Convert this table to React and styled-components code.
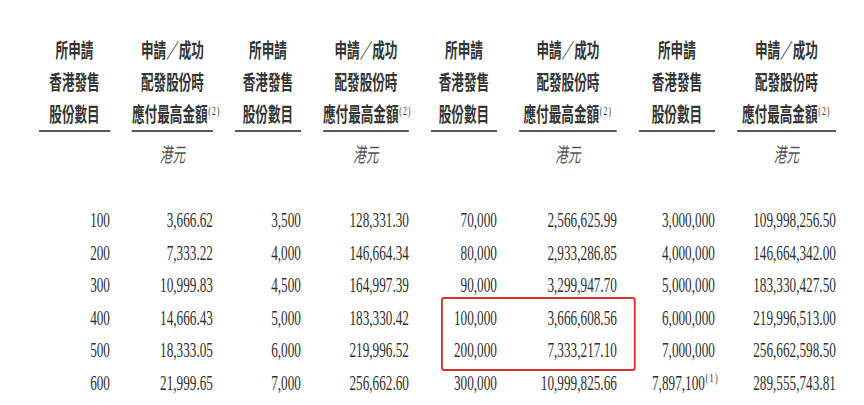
import React from "react";
import styled, { createGlobalStyle } from "styled-components";

// the source table is squeezed horizontally, so the grid is laid out wide and scaled
const K = 0.63;
const u = (v) => v / K;

const COLS = [71, 81, 66, 86, 66, 98, 76, 99];

const Global = createGlobalStyle`
  html, body {
    margin: 0;
    padding: 0;
    background: #fff;
    overflow: hidden;
  }
`;

const Page = styled.div`
  width: 864px;
  height: 405px;
  overflow: hidden;
`;

const Table = styled.div`
  display: grid;
  grid-template-columns: ${COLS.map((w) => `${u(w)}px`).join(" ")};
  grid-template-rows: auto auto repeat(6, 32.6px);
  column-gap: ${u(22)}px;
  padding: 34px 0 0 ${u(39)}px;
  width: max-content;
  transform: scaleX(${K});
  transform-origin: 0 0;
  color: #333;
`;

const HeaderCell = styled.div`
  grid-row: 1;
  grid-column: ${(p) => p.$col};
  font-family: "Noto Sans CJK TC", "Noto Sans CJK SC", sans-serif;
  font-weight: 700;
  font-size: 20px;
  line-height: 32px;
  text-align: center;
  white-space: nowrap;
  border-bottom: 2px solid #5a5a5a;
  color: #353535;
`;

const Note = styled.sup`
  font-family: "Liberation Serif", serif;
  font-weight: 400;
  font-size: ${(p) => p.$size || 12}px;
  letter-spacing: 2px;
  line-height: 0;
  vertical-align: ${(p) => p.$raise || 7}px;
  margin-left: 1px;
  margin-right: ${(p) => p.$overhang || 0}px;
  color: #333;
`;

const UnitCell = styled.div`
  grid-row: 2;
  grid-column: ${(p) => p.$col};
  font-family: "Noto Sans CJK TC", "Noto Sans CJK SC", sans-serif;
  font-style: italic;
  font-size: 20px;
  line-height: 32px;
  padding: 6px 0 34px;
  text-align: center;
  color: #555;
`;

const NumCell = styled.div`
  grid-row: ${(p) => p.$row + 3};
  grid-column: ${(p) => p.$col};
  font-family: "Liberation Serif", "Times New Roman", serif;
  font-size: 21px;
  line-height: 32.6px;
  text-align: right;
  white-space: nowrap;
  color: #2f2f2f;
`;

const Highlight = styled.div`
  grid-column: 5 / 7;
  grid-row: 6 / 8;
  margin: -4.5px ${u(-19)}px -4.5px ${u(10)}px;
  border-style: solid;
  border-color: #dc2f2a;
  border-width: 2.5px ${u(2.5)}px;
  border-radius: ${u(3)}px / 3px;
  pointer-events: none;
`;

const headers = [
  ["所申請", "香港發售", "股份數目"],
  ["申請／成功", "配發股份時", "應付最高金額"],
];

const rows = [
  ["100", "3,666.62", "3,500", "128,331.30", "70,000", "2,566,625.99", "3,000,000", "109,998,256.50"],
  ["200", "7,333.22", "4,000", "146,664.34", "80,000", "2,933,286.85", "4,000,000", "146,664,342.00"],
  ["300", "10,999.83", "4,500", "164,997.39", "90,000", "3,299,947.70", "5,000,000", "183,330,427.50"],
  ["400", "14,666.43", "5,000", "183,330.42", "100,000", "3,666,608.56", "6,000,000", "219,996,513.00"],
  ["500", "18,333.05", "6,000", "219,996.52", "200,000", "7,333,217.10", "7,000,000", "256,662,598.50"],
  ["600", "21,999.65", "7,000", "256,662.60", "300,000", "10,999,825.66", "7,897,100|1", "289,555,743.81"],
];

const Value = ({ text }) => {
  const [num, note] = text.split("|");
  return (
    <>
      {num}
      {note && (
        <Note $size={13} $raise={8} $overhang={u(-4)}>
          ({note})
        </Note>
      )}
    </>
  );
};

export default function App() {
  return (
    <Page>
      <Global />
      <Table>
        {COLS.map((_, i) => {
          const lines = headers[i % 2];
          return (
            <HeaderCell key={`h${i}`} $col={i + 1}>
              {lines[0]}
              <br />
              {lines[1]}
              <br />
              {lines[2]}
              {i % 2 === 1 && <Note>(2)</Note>}
            </HeaderCell>
          );
        })}
        {COLS.map((_, i) => (
          <UnitCell key={`u${i}`} $col={i + 1}>
            {i % 2 === 1 ? "港元" : ""}
          </UnitCell>
        ))}
        {rows.map((r, ri) =>
          r.map((v, ci) => (
            <NumCell key={`${ri}-${ci}`} $row={ri} $col={ci + 1}>
              <Value text={v} />
            </NumCell>
          ))
        )}
        <Highlight />
      </Table>
    </Page>
  );
}
